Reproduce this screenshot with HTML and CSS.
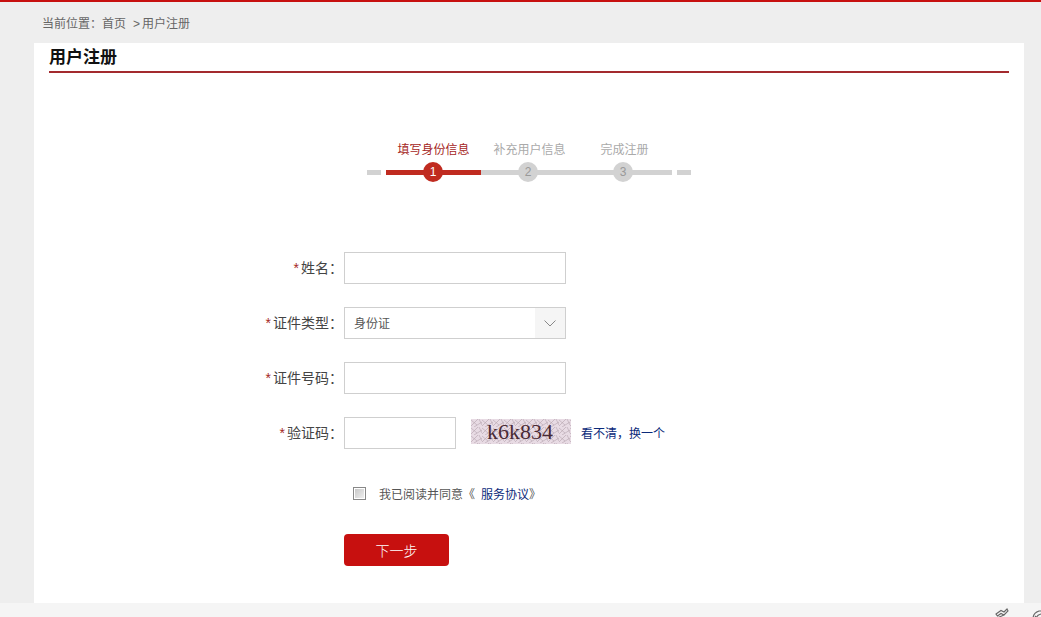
FILE: index.html
```html
<!DOCTYPE html>
<html lang="zh-CN">
<head>
    <meta charset="UTF-8">
    <title>用户注册</title>
    <link rel="stylesheet" href="styles.css">
</head>
<body>
    <div class="crumbs">
        <span>当前位置：</span><a href="#">首页</a><span class="crumb-sep">&gt;</span><span>用户注册</span>
    </div>

    <div class="panel">
        <h1 class="panel-title">用户注册</h1>

        <div class="steps">
            <div class="step-labels">
                <div class="step-label active">填写身份信息</div>
                <div class="step-label">补充用户信息</div>
                <div class="step-label">完成注册</div>
            </div>
            <div class="step-track">
                <div class="step-dash"></div>
                <div class="step active"><span class="step-num">1</span></div>
                <div class="step"><span class="step-num">2</span></div>
                <div class="step last"><span class="step-num">3</span></div>
                <div class="step-dash"></div>
            </div>
        </div>

        <form class="reg-form">
            <div class="form-row">
                <label class="form-label"><em>*</em>姓名：</label>
                <input class="text-input" type="text">
            </div>
            <div class="form-row">
                <label class="form-label"><em>*</em>证件类型：</label>
                <div class="select-box">
                    <span class="select-value">身份证</span>
                    <span class="select-arrow">
                        <svg width="12" height="7" viewBox="0 0 12 7"><path d="M0.5 0.5 L6 6 L11.5 0.5" fill="none" stroke="#888" stroke-width="1"/></svg>
                    </span>
                </div>
            </div>
            <div class="form-row">
                <label class="form-label"><em>*</em>证件号码：</label>
                <input class="text-input" type="text">
            </div>
            <div class="form-row">
                <label class="form-label"><em>*</em>验证码：</label>
                <input class="text-input code-input" type="text">
                <svg class="captcha" width="100" height="25" viewBox="0 0 100 25">
                    <defs>
                        <pattern id="noise" width="11" height="8" patternUnits="userSpaceOnUse">
                            <path d="M0 7 L7 0 M3 8 L11 3 M0 1 L6 6 M8 0 L11 6" stroke="#b3a3ad" stroke-width="0.6" fill="none"/>
                        </pattern>
                    </defs>
                    <rect width="100" height="25" fill="#e8dbe4"/>
                    <rect width="100" height="25" fill="url(#noise)"/>
                    <text x="16" y="20" font-family="Liberation Serif" font-size="22" fill="#4a2a35">k6k834</text>
                </svg>
                <a class="link refresh" href="#">看不清，换一个</a>
            </div>
            <div class="agree-row">
                <input class="agree-check" type="checkbox">
                <span>我已阅读并同意《</span><a class="link agree-link" href="#">服务协议</a><span>》</span>
            </div>
            <button class="next-button" type="button">下一步</button>
        </form>
    </div>

    <div class="footer">
        <svg width="14" height="14" viewBox="0 0 14 14"><path d="M1 6 L6 2.5 L9 4 L12 1 L13 3 L9 7 L6 5.5 L2.5 8 Z M2 10 L9 7" fill="none" stroke="#666" stroke-width="1.1"/></svg>
        <svg width="14" height="14" viewBox="0 0 14 14"><path d="M1 11 Q1 5 7 3 L11 3 M4 12 Q4 7 9 6 L14 6 M3 8 L7 12" fill="none" stroke="#666" stroke-width="1.2"/></svg>
    </div>
</body>
</html>
```

FILE: styles.css
```css
html, body {
    height: 617px;
    overflow: hidden;
}

body {
    margin: 0;
    background-color: #eeeeee;
    border-top: 2px solid #c7100f;
    font-family: "Liberation Sans", "Noto Sans CJK SC", sans-serif;
    font-size: 12px;
    color: #555;
    box-sizing: border-box;
}

a {
    text-decoration: none;
    color: inherit;
}

.crumbs {
    height: 41px;
    line-height: 45px;
    padding-left: 42px;
    color: #666;
}

.crumb-sep {
    margin: 0 2px 0 7px;
}

.panel {
    width: 990px;
    height: 560px;
    margin-left: 34px;
    background-color: #fff;
    padding: 0 15px;
    box-sizing: border-box;
}

.panel-title {
    margin: 0;
    height: 28px;
    line-height: 30px;
    border-bottom: 2px solid #a32a2e;
    font-size: 17px;
    font-weight: bold;
    color: #111;
}

/* steps */
.steps {
    margin: 68px 0 0 318px;
    width: 324px;
}

.step-labels {
    display: flex;
    padding-left: 19px;
    height: 18px;
    line-height: 18px;
}

.step-label {
    width: 95px;
    text-align: center;
    color: #aaa;
}

.step-label:nth-child(n+2) {
    padding-left: 2px;
    box-sizing: border-box;
}

.step-label.active {
    color: #a5261d;
}

.step-track {
    display: flex;
    align-items: center;
    height: 20px;
    margin-top: 3px;
}

.step-dash {
    width: 14px;
    height: 5px;
    background-color: #d2d2d2;
}

.step {
    width: 95px;
    height: 20px;
    display: flex;
    justify-content: center;
    background: linear-gradient(#d2d2d2, #d2d2d2) center / 100% 5px no-repeat;
}

.step:nth-child(2) {
    margin-left: 5px;
}

.step.last {
    width: 96px;
    margin-right: 5px;
}

.step.active {
    background-image: linear-gradient(#c02b20, #c02b20);
}

.step-num {
    width: 20px;
    height: 20px;
    line-height: 20px;
    margin-left: -1px;
    border-radius: 50%;
    background-color: #d2d2d2;
    color: #999;
    text-align: center;
}

.step.last .step-num {
    margin-left: -2px;
}

.step.active .step-num {
    background-color: #c02b20;
    color: #fff;
}

/* form */
.reg-form {
    margin: 70px 0 0 295px;
}

.form-row {
    display: flex;
    align-items: center;
    height: 32px;
    margin-bottom: 23px;
}

.form-label {
    flex: none;
    width: 109px;
    margin-left: -110px;
    margin-right: 1px;
    padding-bottom: 2px;
    text-align: right;
    font-size: 14px;
    color: #444;
    white-space: nowrap;
}

.form-label em {
    font-style: normal;
    color: #a5261d;
    margin-right: 2px;
}

.text-input,
.select-box {
    width: 222px;
    height: 32px;
    padding: 0;
    border: 1px solid #cfcfcf;
    box-sizing: border-box;
    background-color: #fff;
}

.select-box {
    display: flex;
    align-items: center;
    justify-content: space-between;
    padding-left: 9px;
    color: #555;
}

.select-value {
    padding-bottom: 2px;
}

.select-arrow {
    display: flex;
    align-items: center;
    justify-content: center;
    width: 30px;
    height: 30px;
    background-color: #f5f5f5;
}

.code-input {
    width: 112px;
}

.captcha {
    margin: 0 10px 3px 15px;
}

.link {
    color: #0b2a7a;
}

.refresh {
    margin-bottom: 2px;
}

.agree-row {
    display: flex;
    align-items: center;
    height: 20px;
    margin-top: 34px;
}

.agree-check {
    appearance: none;
    width: 13px;
    height: 13px;
    margin: 0 13px 0 9px;
    border: 1px solid #888;
    box-shadow: inset 0 0 0 1px #fff;
    background: linear-gradient(135deg, #c4c4c4, #f2f2f2);
}

.agree-link {
    margin-left: 6px;
}

.next-button {
    display: block;
    width: 105px;
    height: 32px;
    margin-top: 31px;
    border: none;
    border-radius: 4px;
    background-color: #c7100f;
    color: #fff;
    font-family: inherit;
    font-size: 14px;
    font-weight: 300;
    cursor: pointer;
}

.footer {
    height: 14px;
    background-color: #f5f5f5;
    display: flex;
    justify-content: flex-end;
    gap: 23px;
    margin-right: -5px;
    padding-top: 5px;
}
```
